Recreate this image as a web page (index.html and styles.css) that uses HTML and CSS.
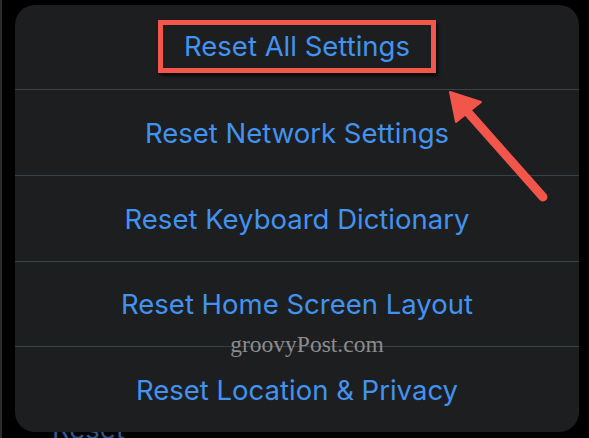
FILE: index.html
```html
<!DOCTYPE html>
<html>
<head>
	<meta charset="utf-8">
	<meta name="viewport" content="width=device-width, initial-scale=1">
	<title>Reset</title>
	<link rel="stylesheet" href="styles.css">
</head>
<body>
	<div class="behind">Reset</div>
	<div class="sheet">
		<div class="row"><span class="label boxed">Reset All Settings</span></div>
		<div class="row"><span class="label">Reset Network Settings</span></div>
		<div class="row"><span class="label">Reset Keyboard Dictionary</span></div>
		<div class="row"><span class="label">Reset Home Screen Layout</span></div>
		<div class="row"><span class="label">Reset Location &amp; Privacy</span></div>
		<div class="watermark">groovyPost.com</div>
		<svg class="arrow" width="140" height="130" viewBox="0 0 140 130">
			<line x1="123" y1="123" x2="45" y2="35" stroke="#f2564b" stroke-width="9" stroke-linecap="round"/>
			<polygon points="30,18 61,28 36,48" fill="#f2564b" stroke="#f2564b" stroke-width="2" stroke-linejoin="round"/>
		</svg>
	</div>
</body>
</html>
```
FILE: styles.css
```css
body{
	margin: 0;
	background-color: #000;
	height: 438px;
	overflow: hidden;
	position: relative;
	font-family: Inter, "Liberation Sans", sans-serif;
	border-left: 2px solid #2b2b2b;
	box-sizing: border-box;
}
.sheet{
	position: relative;
	margin: 5px 0 0 13px;
	width: 564px;
	height: 427px;
	background-color: #1d1e20;
	border-radius: 20px;
	display: grid;
	grid-template-rows: 84px 86px 86px 85px 86px;
}
.row{
	display: flex;
	align-items: center;
	justify-content: center;
	border-top: 1px solid #3a4049;
}
.row:first-child{
	border-top: none;
}
.label{
	color: #4293f0;
	font-size: 27.5px;
	letter-spacing: 0;
}
.boxed{
	border: 5px solid #f5564b;
	padding: 4px 21px 5px 21px;
	margin-top: -2px;
	box-shadow: 2px 3px 3px rgba(0,0,0,0.7);
}
.watermark{
	position: absolute;
	left: 0;
	right: 0;
	top: 326px;
	padding-left: 20px;
	text-align: center;
	font-family: "Liberation Serif", serif;
	font-size: 23.5px;
	color: #8c8c8c;
}
.arrow{
	position: absolute;
	left: 405px;
	top: 69px;
}
.behind{
	position: absolute;
	left: 50px;
	top: 412px;
	font-size: 27.5px;
	color: #2d5a8e;
}
```
